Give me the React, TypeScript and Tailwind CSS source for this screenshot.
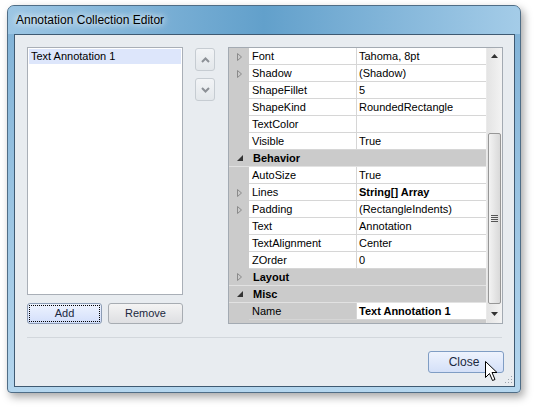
import React from 'react';

type Row =
  | { kind: 'prop'; name: string; value: string; expand?: boolean; bold?: boolean; selected?: boolean }
  | { kind: 'cat'; name: string; open: boolean };

const rows: Row[] = [
  { kind: 'prop', name: 'Font', value: 'Tahoma, 8pt', expand: true },
  { kind: 'prop', name: 'Shadow', value: '(Shadow)', expand: true },
  { kind: 'prop', name: 'ShapeFillet', value: '5' },
  { kind: 'prop', name: 'ShapeKind', value: 'RoundedRectangle' },
  { kind: 'prop', name: 'TextColor', value: '' },
  { kind: 'prop', name: 'Visible', value: 'True' },
  { kind: 'cat', name: 'Behavior', open: true },
  { kind: 'prop', name: 'AutoSize', value: 'True' },
  { kind: 'prop', name: 'Lines', value: 'String[] Array', expand: true, bold: true },
  { kind: 'prop', name: 'Padding', value: '(RectangleIndents)', expand: true },
  { kind: 'prop', name: 'Text', value: 'Annotation' },
  { kind: 'prop', name: 'TextAlignment', value: 'Center' },
  { kind: 'prop', name: 'ZOrder', value: '0' },
  { kind: 'cat', name: 'Layout', open: false },
  { kind: 'cat', name: 'Misc', open: true },
  { kind: 'prop', name: 'Name', value: 'Text Annotation 1', bold: true, selected: true },
];

function Closed() {
  return (
    <svg width="5" height="8" viewBox="0 0 5 8">
      <path d="M0.5 0.5 L4.5 4 L0.5 7.5 Z" fill="none" stroke="#8a8a8a" />
    </svg>
  );
}

function Open() {
  return (
    <svg width="6" height="6" viewBox="0 0 6 6">
      <path d="M6 0 L6 6 L0 6 Z" fill="#333" />
    </svg>
  );
}

function PropertyGrid() {
  return (
    <div className="w-[275px] h-[277px] border border-[#a3aab2] bg-[#cbcbcb] flex">
      <div className="flex-1 flex flex-col">
        {rows.map((r, i) =>
          r.kind === 'cat' ? (
            <div key={i} className="h-[17px] flex border-b border-[#e2e2e2] bg-[#cbcbcb]">
              <div className="w-[20px] flex items-center justify-center pl-[1px]">
                {r.open ? <Open /> : <Closed />}
              </div>
              <div className="pl-[4px] font-bold leading-[17px]">{r.name}</div>
            </div>
          ) : (
            <div key={i} className="h-[17px] flex">
              <div className="w-[20px] flex items-center justify-center pl-[1px]">
                {r.expand ? <Closed /> : null}
              </div>
              <div
                className={`w-[108px] pl-[3px] leading-[17px] border-r border-b border-[#d6d6d6] ${
                  r.selected ? 'bg-[#cbcbcb]' : 'bg-white'
                }`}
              >
                {r.name}
              </div>
              <div className={`flex-1 pl-[2px] leading-[17px] bg-white border-b border-[#d6d6d6] ${r.bold ? 'font-bold' : ''}`}>
                {r.value}
              </div>
            </div>
          )
        )}
      </div>
      {/* scrollbar */}
      <div className="w-[16px] flex flex-col bg-gradient-to-r from-[#e4e4e4] to-[#f3f3f3] border-l border-[#eaeaea]">
        <div className="h-[16px] flex items-center justify-center">
          <svg width="7" height="4" viewBox="0 0 7 4">
            <path d="M0 4 L3.5 0 L7 4 Z" fill="#333" />
          </svg>
        </div>
        <div className="h-[69px]" />
        <div className="h-[171px] mx-[1px] rounded-[2px] border border-[#979797] bg-gradient-to-r from-[#f3f3f3] to-[#d9d9d9] flex flex-col items-center justify-center gap-[1px]">
          <div className="w-[7px] h-px bg-[#555]" />
          <div className="w-[7px] h-px bg-[#555]" />
          <div className="w-[7px] h-px bg-[#555]" />
          <div className="w-[7px] h-px bg-[#555]" />
        </div>
        <div className="flex-1 flex items-center justify-center">
          <svg width="7" height="4" viewBox="0 0 7 4">
            <path d="M0 0 L3.5 4 L7 0 Z" fill="#333" />
          </svg>
        </div>
      </div>
    </div>
  );
}

function Arrow({ down }: { down?: boolean }) {
  return (
    <div className="w-[20px] h-[23px] rounded-[3px] border border-[#c6ccd2] bg-gradient-to-b from-[#f2f4f6] to-[#e3e7eb] flex items-center justify-center">
      <svg width="9" height="6" viewBox="0 0 9 6">
        <path d={down ? 'M1 1 L4.5 4.5 L8 1' : 'M1 5 L4.5 1.5 L8 5'} fill="none" stroke="#8c9096" strokeWidth="2" />
      </svg>
    </div>
  );
}

export default function App() {
  return (
    <div className="w-[535px] h-[407px] bg-white relative" style={{ fontFamily: '"Liberation Sans", Arial, sans-serif' }}>
      <div className="absolute left-[7px] top-[5px] w-[514px] h-[388px] rounded-t-[7px] rounded-b-[4px] border border-[#4f6d86] bg-gradient-to-b from-[#7fb1d6] to-[#b4d6ee] shadow-[3px_4px_8px_rgba(0,0,0,0.35)] flex flex-col">
        <div className="h-[28px] flex items-center pl-[8px] pb-[1px] rounded-t-[6px] bg-gradient-to-r from-[#9cc6e4] via-[#62a0cb] to-[#a4cce8]">
          <span className="text-[12px] text-black [text-shadow:0_0_6px_#ffffff,0_0_10px_#ffffff]">
            Annotation Collection Editor
          </span>
        </div>
        <div className="ml-[6px] w-[501px] h-[353px] border border-[#3f5a72] bg-[#e8ecf0] flex flex-col text-[11px] text-black">
          <div className="flex pl-[12px] pt-[12px]">
            <div className="w-[156px] flex flex-col">
              <div className="h-[248px] border border-[#a9afb7] bg-white p-[1px]">
                <div className="h-[15px] bg-[#dde6fb] pl-[2px] leading-[15px]">Text Annotation 1</div>
              </div>
              <div className="flex justify-between mt-[8px]">
                <div className="w-[75px] h-[21px] rounded-[3px] border border-[#8c9cb4] bg-gradient-to-b from-[#eef3fe] to-[#d3dffb] p-[1px]">
                  <div className="h-full border border-dotted border-black flex items-center justify-center text-[#1b2840]">
                    Add
                  </div>
                </div>
                <div className="w-[75px] h-[21px] rounded-[3px] border border-[#a7acb2] bg-gradient-to-b from-[#f4f4f4] to-[#dedfe2] flex items-center justify-center text-[#1b2840]">
                  Remove
                </div>
              </div>
            </div>
            <div className="ml-[12px] flex flex-col gap-[7px] pt-[1px]">
              <Arrow />
              <Arrow down />
            </div>
            <div className="ml-[13px]">
              <PropertyGrid />
            </div>
          </div>
          <div className="mx-[12px] mt-[13px] h-px bg-[#d2d7dc]" />
          <div className="flex justify-end pr-[10px] mt-[13px]">
            <div className="w-[76px] h-[22px] rounded-[3px] border border-[#7f9dc4] bg-gradient-to-b from-[#eef3fd] to-[#d4e0f8] flex items-center justify-center pr-[4px] text-[12px] text-[#1b2840]">
              Close
            </div>
          </div>
        </div>
      </div>
      {/* resize grip */}
      <svg className="absolute left-[505px] top-[376px]" width="8" height="8" viewBox="0 0 8 8">
        <rect x="6" y="0" width="1" height="1" fill="#9aa3ad" />
        <rect x="3" y="3" width="1" height="1" fill="#9aa3ad" />
        <rect x="6" y="3" width="1" height="1" fill="#9aa3ad" />
        <rect x="0" y="6" width="1" height="1" fill="#9aa3ad" />
        <rect x="3" y="6" width="1" height="1" fill="#9aa3ad" />
        <rect x="6" y="6" width="1" height="1" fill="#9aa3ad" />
      </svg>
      {/* mouse cursor */}
      <svg className="absolute left-[485px] top-[361px]" width="14" height="22" viewBox="0 0 14 22">
        <path d="M0.5 0.5 L0.5 16.5 L4.5 12.5 L7.5 19.5 L10 18.5 L7 11.5 L12 11.5 Z" fill="#fff" stroke="#000" strokeLinejoin="round" />
      </svg>
    </div>
  );
}
